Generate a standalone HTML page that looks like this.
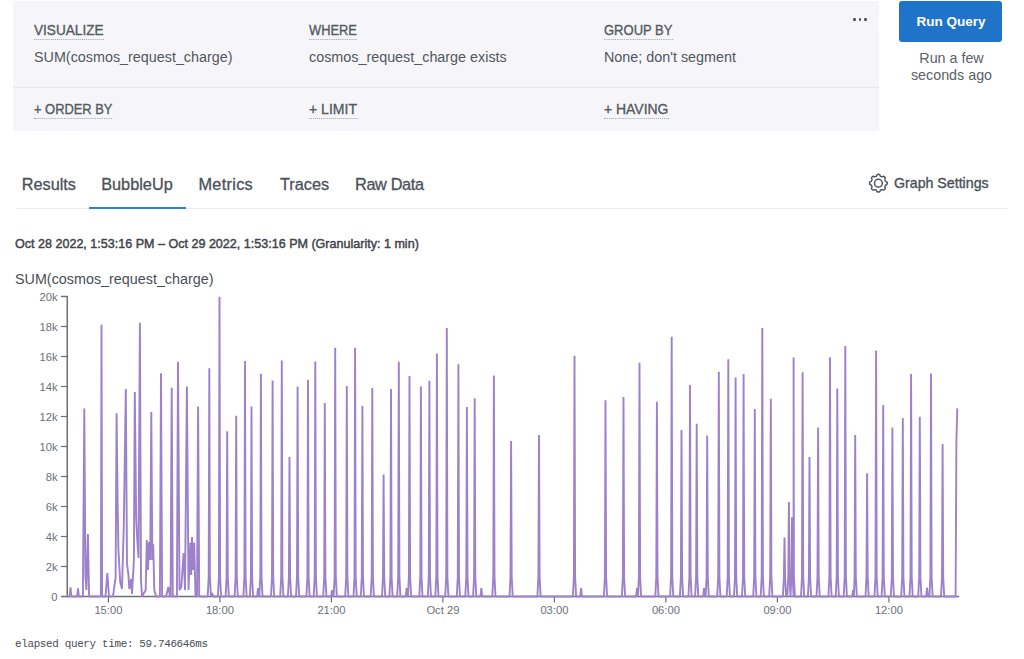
<!DOCTYPE html>
<html><head><meta charset="utf-8">
<style>
html,body{margin:0;padding:0;background:#fff;width:1024px;height:659px;overflow:hidden;position:relative;font-family:"Liberation Sans",sans-serif;}
.a{position:absolute;white-space:nowrap;line-height:1;}
#panel{position:absolute;left:13px;top:1px;width:866px;height:130px;background:#f6f6fa;}
#pdiv{position:absolute;left:13px;top:87px;width:866px;height:1px;background:#e8e8ef;}
.lbl{font-size:14.2px;color:#555a61;-webkit-text-stroke:0.35px #555a61;border-bottom:1px dotted #9fa3aa;padding-bottom:2px;}
.val{font-size:14.35px;color:#51565d;}
.tab{font-size:16.3px;color:#4b5159;-webkit-text-stroke:0.3px #4b5159;}
</style></head><body>
<div id="panel"></div>
<div id="pdiv"></div>
<div class="a lbl" style="left:34px;top:23px;;transform:scaleX(0.96);transform-origin:0 0;">VISUALIZE</div>
<div class="a val" style="left:34px;top:50px;">SUM(cosmos_request_charge)</div>
<div class="a lbl" style="left:309px;top:23px;;transform:scaleX(0.906);transform-origin:0 0;">WHERE</div>
<div class="a val" style="left:309px;top:50px;">cosmos_request_charge exists</div>
<div class="a lbl" style="left:604px;top:23px;;transform:scaleX(0.917);transform-origin:0 0;">GROUP BY</div>
<div class="a val" style="left:604px;top:50px;">None; don't segment</div>
<div class="a lbl" style="left:34px;top:102px;;transform:scaleX(0.909);transform-origin:0 0;">+ ORDER BY</div>
<div class="a lbl" style="left:309px;top:102px;;transform:scaleX(0.99);transform-origin:0 0;">+ LIMIT</div>
<div class="a lbl" style="left:604px;top:102px;;transform:scaleX(0.983);transform-origin:0 0;">+ HAVING</div>
<div style="position:absolute;left:853.35px;top:17.95px;width:2.7px;height:2.7px;border-radius:50%;background:#4b5059;"></div>
<div style="position:absolute;left:858.65px;top:17.95px;width:2.7px;height:2.7px;border-radius:50%;background:#4b5059;"></div>
<div style="position:absolute;left:863.85px;top:17.95px;width:2.7px;height:2.7px;border-radius:50%;background:#4b5059;"></div>
<div style="position:absolute;left:899px;top:0.8px;width:103.3px;height:41px;border-radius:3px;background:#1f74c9;"></div>
<div class="a" style="left:899.5px;width:103px;text-align:center;top:14.5px;font-weight:bold;font-size:13.5px;color:#fff;">Run Query</div>
<div class="a" style="left:899px;width:105px;text-align:center;top:50.3px;font-size:14.3px;line-height:16.3px;color:#5a6068;white-space:normal;">Run a few<br>seconds ago</div>

<div class="a tab" style="left:21.7px;top:175.8px;">Results</div>
<div class="a tab" style="left:101.2px;top:175.8px;">BubbleUp</div>
<div class="a tab" style="left:198.5px;top:175.8px;letter-spacing:0.3px;">Metrics</div>
<div class="a tab" style="left:280px;top:175.8px;">Traces</div>
<div class="a tab" style="left:355px;top:175.8px;letter-spacing:-0.35px;">Raw Data</div>
<div style="position:absolute;left:17px;top:208px;width:990px;height:1px;background:#ebebf2;"></div>
<div style="position:absolute;left:89px;top:207px;width:97px;height:2px;background:#2b83d3;"></div>
<svg width="1024" height="659" style="position:absolute;left:0;top:0"><path d="M878.40,174.35 L878.75,174.37 L879.09,174.45 L879.42,174.58 L879.73,174.78 L879.97,175.30 L880.17,175.83 L880.41,176.06 L880.66,176.24 L880.92,176.38 L881.17,176.50 L881.44,176.60 L881.72,176.68 L882.03,176.73 L882.36,176.74 L882.87,176.51 L883.41,176.31 L883.77,176.38 L884.10,176.53 L884.40,176.71 L884.66,176.94 L884.89,177.20 L885.07,177.50 L885.22,177.83 L885.29,178.19 L885.09,178.73 L884.86,179.24 L884.87,179.57 L884.92,179.88 L885.00,180.16 L885.10,180.43 L885.22,180.68 L885.36,180.94 L885.54,181.19 L885.77,181.43 L886.30,181.63 L886.82,181.87 L887.02,182.18 L887.15,182.51 L887.23,182.85 L887.25,183.20 L887.23,183.55 L887.15,183.89 L887.02,184.22 L886.82,184.53 L886.30,184.77 L885.77,184.97 L885.54,185.21 L885.36,185.46 L885.22,185.72 L885.10,185.97 L885.00,186.24 L884.92,186.52 L884.87,186.83 L884.86,187.16 L885.09,187.67 L885.29,188.21 L885.22,188.57 L885.07,188.90 L884.89,189.20 L884.66,189.46 L884.40,189.69 L884.10,189.87 L883.77,190.02 L883.41,190.09 L882.87,189.89 L882.36,189.66 L882.03,189.67 L881.72,189.72 L881.44,189.80 L881.17,189.90 L880.92,190.02 L880.66,190.16 L880.41,190.34 L880.17,190.57 L879.97,191.10 L879.73,191.62 L879.42,191.82 L879.09,191.95 L878.75,192.03 L878.40,192.05 L878.05,192.03 L877.71,191.95 L877.38,191.82 L877.07,191.62 L876.83,191.10 L876.63,190.57 L876.39,190.34 L876.14,190.16 L875.88,190.02 L875.63,189.90 L875.36,189.80 L875.08,189.72 L874.77,189.67 L874.44,189.66 L873.93,189.89 L873.39,190.09 L873.03,190.02 L872.70,189.87 L872.40,189.69 L872.14,189.46 L871.91,189.20 L871.73,188.90 L871.58,188.57 L871.51,188.21 L871.71,187.67 L871.94,187.16 L871.93,186.83 L871.88,186.52 L871.80,186.24 L871.70,185.97 L871.58,185.72 L871.44,185.46 L871.26,185.21 L871.03,184.97 L870.50,184.77 L869.98,184.53 L869.78,184.22 L869.65,183.89 L869.57,183.55 L869.55,183.20 L869.57,182.85 L869.65,182.51 L869.78,182.18 L869.98,181.87 L870.50,181.63 L871.03,181.43 L871.26,181.19 L871.44,180.94 L871.58,180.68 L871.70,180.43 L871.80,180.16 L871.88,179.88 L871.93,179.57 L871.94,179.24 L871.71,178.73 L871.51,178.19 L871.58,177.83 L871.73,177.50 L871.91,177.20 L872.14,176.94 L872.40,176.71 L872.70,176.53 L873.03,176.38 L873.39,176.31 L873.93,176.51 L874.44,176.74 L874.77,176.73 L875.08,176.68 L875.36,176.60 L875.63,176.50 L875.88,176.38 L876.14,176.24 L876.39,176.06 L876.63,175.83 L876.83,175.30 L877.07,174.78 L877.38,174.58 L877.71,174.45 L878.05,174.37Z" fill="none" stroke="#50565e" stroke-width="1.5"/><circle cx="878.4" cy="183.2" r="3.9" fill="none" stroke="#50565e" stroke-width="1.5"/></svg>
<div class="a" style="left:894px;top:176.3px;font-size:14.2px;color:#4b5159;-webkit-text-stroke:0.35px #4b5159;">Graph Settings</div>

<div class="a" style="left:15px;top:237.6px;font-size:12.55px;color:#3f444b;-webkit-text-stroke:0.45px #3f444b;">Oct 28 2022, 1:53:16 PM – Oct 29 2022, 1:53:16 PM (Granularity: 1 min)</div>
<div class="a" style="left:15px;top:272px;font-size:14.35px;color:#4a4f57;">SUM(cosmos_request_charge)</div>
<div class="a" style="left:15px;top:638.6px;font-family:'Liberation Mono',monospace;font-size:10.9px;letter-spacing:-0.32px;color:#4d5259;-webkit-text-stroke:0.05px #4d5259;">elapsed query time: 59.746646ms</div>
<!--CHART--><svg width="1024" height="659" style="position:absolute;left:0;top:0"><path d="M61,296.5 H67.25 V596.5 H61" fill="none" stroke="#6b7078" stroke-width="1.5"/><line x1="61" y1="566.5" x2="67" y2="566.5" stroke="#6b7078" stroke-width="1.2"/><line x1="61" y1="536.5" x2="67" y2="536.5" stroke="#6b7078" stroke-width="1.2"/><line x1="61" y1="506.5" x2="67" y2="506.5" stroke="#6b7078" stroke-width="1.2"/><line x1="61" y1="476.5" x2="67" y2="476.5" stroke="#6b7078" stroke-width="1.2"/><line x1="61" y1="446.5" x2="67" y2="446.5" stroke="#6b7078" stroke-width="1.2"/><line x1="61" y1="416.5" x2="67" y2="416.5" stroke="#6b7078" stroke-width="1.2"/><line x1="61" y1="386.5" x2="67" y2="386.5" stroke="#6b7078" stroke-width="1.2"/><line x1="61" y1="356.5" x2="67" y2="356.5" stroke="#6b7078" stroke-width="1.2"/><line x1="61" y1="326.5" x2="67" y2="326.5" stroke="#6b7078" stroke-width="1.2"/><path d="M67,596.5 H959" fill="none" stroke="#6b7078" stroke-width="1.5"/><line x1="108.4" y1="596.5" x2="108.4" y2="602.5" stroke="#6b7078" stroke-width="1.2"/><line x1="219.9" y1="596.5" x2="219.9" y2="602.5" stroke="#6b7078" stroke-width="1.2"/><line x1="331.4" y1="596.5" x2="331.4" y2="602.5" stroke="#6b7078" stroke-width="1.2"/><line x1="442.9" y1="596.5" x2="442.9" y2="602.5" stroke="#6b7078" stroke-width="1.2"/><line x1="554.4" y1="596.5" x2="554.4" y2="602.5" stroke="#6b7078" stroke-width="1.2"/><line x1="665.9" y1="596.5" x2="665.9" y2="602.5" stroke="#6b7078" stroke-width="1.2"/><line x1="777.4" y1="596.5" x2="777.4" y2="602.5" stroke="#6b7078" stroke-width="1.2"/><line x1="888.9" y1="596.5" x2="888.9" y2="602.5" stroke="#6b7078" stroke-width="1.2"/><path d="M67.00,596.5 L69.65,596.5 L70.50,587.4 L71.35,596.5 L77.15,596.5 L78.00,588.3 L78.85,596.5 L82.90,596.5 L84.30,408.4 L85.40,575.0 L86.40,590.0 L87.90,534.0 L89.10,596.5 L100.90,596.5 L101.50,324.7 L102.10,596.5 L105.50,596.5 L107.30,573.0 L109.00,596.5 L113.00,596.5 L114.50,585.0 L115.60,578.0 L116.60,413.3 L117.60,500.0 L118.40,549.0 L120.20,582.0 L122.00,589.0 L123.80,525.5 L125.80,389.0 L127.00,563.8 L128.40,574.7 L129.30,589.0 L131.10,579.0 L132.00,594.0 L133.90,560.0 L134.80,391.9 L136.20,520.0 L137.50,543.8 L138.50,558.0 L139.90,322.8 L141.00,580.0 L142.00,596.5 L145.70,590.0 L146.80,540.0 L148.00,570.0 L149.00,542.0 L150.20,560.0 L151.30,412.1 L152.30,560.0 L153.20,544.0 L154.30,590.0 L156.00,596.5 L159.90,596.5 L161.00,373.3 L162.10,596.5 L166.00,596.5 L168.40,587.0 L170.00,596.5 L170.60,596.5 L171.70,387.8 L172.80,596.5 L176.90,596.5 L178.00,361.8 L179.50,590.0 L181.30,587.0 L183.60,553.0 L185.00,590.0 L186.90,386.6 L188.50,590.0 L190.40,542.5 L191.20,575.0 L192.00,537.0 L193.00,570.0 L194.20,542.5 L195.50,596.5 L197.00,596.5 L198.10,406.5 L199.20,596.5 L207.70,596.5 L208.70,576.5 L209.30,368.2 L209.90,576.5 L210.90,596.5 L210.90,596.5 L211.80,593.0 L213.40,596.5 L217.90,596.5 L218.90,576.5 L219.50,296.8 L220.10,576.5 L221.10,596.5 L225.60,596.5 L226.60,576.5 L227.20,431.3 L227.80,576.5 L228.80,596.5 L234.60,596.5 L235.60,576.5 L236.20,415.7 L236.80,576.5 L237.80,596.5 L243.40,596.5 L244.40,576.5 L245.00,361.1 L245.60,576.5 L246.60,596.5 L249.90,596.5 L250.90,576.5 L251.50,406.5 L252.10,576.5 L253.10,596.5 L257.15,596.5 L258.00,588.0 L258.85,596.5 L259.30,596.5 L260.30,576.5 L260.90,373.7 L261.50,576.5 L262.50,596.5 L271.00,596.5 L272.00,576.5 L272.60,380.5 L273.20,576.5 L274.20,596.5 L280.20,596.5 L281.20,576.5 L281.80,360.4 L282.40,576.5 L283.40,596.5 L287.90,596.5 L288.90,576.5 L289.50,457.0 L290.10,576.5 L291.10,596.5 L296.00,596.5 L297.00,576.5 L297.60,386.6 L298.20,576.5 L299.20,596.5 L306.40,596.5 L307.40,576.5 L308.00,379.8 L308.60,576.5 L309.60,596.5 L313.70,596.5 L314.70,576.5 L315.30,361.4 L315.90,576.5 L316.90,596.5 L323.20,596.5 L324.20,576.5 L324.80,403.1 L325.40,576.5 L326.40,596.5 L331.15,596.5 L332.00,590.0 L332.85,596.5 L333.60,596.5 L334.60,576.5 L335.20,347.8 L335.80,576.5 L336.80,596.5 L345.20,596.5 L346.20,576.5 L346.80,386.1 L347.40,576.5 L348.40,596.5 L353.50,596.5 L354.50,576.5 L355.10,347.8 L355.70,576.5 L356.70,596.5 L360.80,596.5 L361.80,576.5 L362.40,406.0 L363.00,576.5 L364.00,596.5 L370.70,596.5 L371.70,576.5 L372.30,388.1 L372.90,576.5 L373.90,596.5 L382.00,596.5 L383.00,576.5 L383.60,474.5 L384.20,576.5 L385.20,596.5 L389.40,596.5 L390.40,576.5 L391.00,389.0 L391.60,576.5 L392.60,596.5 L397.20,596.5 L398.20,576.5 L398.80,361.8 L399.40,576.5 L400.40,596.5 L405.75,596.5 L406.60,588.0 L407.45,596.5 L407.90,596.5 L408.90,576.5 L409.50,375.9 L410.10,576.5 L411.10,596.5 L419.30,596.5 L420.30,576.5 L420.90,386.4 L421.50,576.5 L422.50,596.5 L427.80,596.5 L428.80,576.5 L429.40,380.8 L430.00,576.5 L431.00,596.5 L435.30,596.5 L436.30,576.5 L436.90,353.6 L437.50,576.5 L438.50,596.5 L445.20,596.5 L446.20,576.5 L446.80,327.9 L447.40,576.5 L448.40,596.5 L456.80,596.5 L457.80,576.5 L458.40,364.3 L459.00,576.5 L460.00,596.5 L465.30,596.5 L466.30,576.5 L466.90,407.0 L467.50,576.5 L468.50,596.5 L473.10,596.5 L474.10,576.5 L474.70,398.3 L475.30,576.5 L476.30,596.5 L480.45,596.5 L481.30,588.0 L482.15,596.5 L492.30,596.5 L493.30,576.5 L493.90,375.4 L494.50,576.5 L495.50,596.5 L509.50,596.5 L510.50,576.5 L511.10,441.0 L511.70,576.5 L512.70,596.5 L537.40,596.5 L538.40,576.5 L539.00,434.9 L539.60,576.5 L540.60,596.5 L572.90,596.5 L573.90,576.5 L574.50,355.8 L575.10,576.5 L576.10,596.5 L580.25,596.5 L581.10,588.0 L581.95,596.5 L603.90,596.5 L604.90,576.5 L605.50,400.2 L606.10,576.5 L607.10,596.5 L621.90,596.5 L622.90,576.5 L623.50,397.0 L624.10,576.5 L625.10,596.5 L636.15,596.5 L637.00,588.0 L637.85,596.5 L637.90,596.5 L638.90,576.5 L639.50,362.8 L640.10,576.5 L641.10,596.5 L655.30,596.5 L656.30,576.5 L656.90,401.7 L657.50,576.5 L658.50,596.5 L670.10,596.5 L671.10,576.5 L671.70,336.8 L672.30,576.5 L673.30,596.5 L679.90,596.5 L680.90,576.5 L681.50,430.0 L682.10,576.5 L683.10,596.5 L688.40,596.5 L689.40,576.5 L690.00,385.1 L690.60,576.5 L691.60,596.5 L695.10,596.5 L696.10,576.5 L696.70,423.7 L697.30,576.5 L698.30,596.5 L703.15,596.5 L704.00,588.0 L704.85,596.5 L705.60,596.5 L706.60,576.5 L707.20,435.6 L707.80,576.5 L708.80,596.5 L717.20,596.5 L718.20,576.5 L718.80,371.8 L719.40,576.5 L720.40,596.5 L726.70,596.5 L727.70,576.5 L728.30,359.2 L728.90,576.5 L729.90,596.5 L734.00,596.5 L735.00,576.5 L735.60,377.4 L736.20,576.5 L737.20,596.5 L742.00,596.5 L743.00,576.5 L743.60,374.0 L744.20,576.5 L745.20,596.5 L753.20,596.5 L754.20,576.5 L754.80,408.9 L755.40,576.5 L756.40,596.5 L760.70,596.5 L761.70,576.5 L762.30,328.1 L762.90,576.5 L763.90,596.5 L769.20,596.5 L770.20,576.5 L770.80,398.7 L771.40,576.5 L772.40,596.5 L782.90,596.5 L783.90,576.5 L784.50,537.6 L785.10,576.5 L786.10,596.5 L787.30,596.5 L788.30,576.5 L788.90,501.9 L789.50,576.5 L790.50,596.5 L790.50,596.5 L791.40,576.5 L792.00,517.2 L792.60,576.5 L793.60,596.5 L793.60,596.5 L793.60,576.5 L793.60,357.5 L793.90,576.5 L794.90,596.5 L801.00,596.5 L802.00,576.5 L802.60,372.3 L803.20,576.5 L804.20,596.5 L807.90,596.5 L808.90,576.5 L809.50,457.0 L810.10,576.5 L811.10,596.5 L816.50,596.5 L817.50,576.5 L818.10,427.6 L818.70,576.5 L819.70,596.5 L828.40,596.5 L829.40,576.5 L830.00,357.2 L830.60,576.5 L831.60,596.5 L835.70,596.5 L836.70,576.5 L837.30,388.5 L837.90,576.5 L838.90,596.5 L843.70,596.5 L844.70,576.5 L845.30,346.1 L845.90,576.5 L846.90,596.5 L852.15,596.5 L853.00,590.0 L853.85,596.5 L853.85,596.5 L854.60,576.5 L855.20,434.9 L855.80,576.5 L856.80,596.5 L865.50,596.5 L866.50,576.5 L867.10,473.3 L867.70,576.5 L868.70,596.5 L874.50,596.5 L875.50,576.5 L876.10,350.4 L876.70,576.5 L877.70,596.5 L881.60,596.5 L882.60,576.5 L883.20,405.0 L883.80,576.5 L884.80,596.5 L890.80,596.5 L891.80,576.5 L892.40,427.4 L893.00,576.5 L894.00,596.5 L901.20,596.5 L902.20,576.5 L902.80,418.2 L903.40,576.5 L904.40,596.5 L909.50,596.5 L910.50,576.5 L911.10,374.0 L911.70,576.5 L912.70,596.5 L918.20,596.5 L919.20,576.5 L919.80,416.7 L920.40,576.5 L921.40,596.5 L926.15,596.5 L927.00,587.6 L927.85,596.5 L929.40,596.5 L930.40,576.5 L931.00,373.5 L931.60,576.5 L932.60,596.5 L941.00,596.5 L942.00,576.5 L942.60,444.1 L943.20,576.5 L944.20,596.5 L955.60,596.5 L956.40,440.0 L957.30,408.4" fill="none" stroke="#9d81ca" stroke-width="1.9" stroke-linejoin="bevel"/><g font-family="Liberation Sans, sans-serif" font-size="11.2" fill="#6b7078"><text x="57.5" y="600.6" text-anchor="end">0</text><text x="57.5" y="570.6" text-anchor="end">2k</text><text x="57.5" y="540.6" text-anchor="end">4k</text><text x="57.5" y="510.6" text-anchor="end">6k</text><text x="57.5" y="480.6" text-anchor="end">8k</text><text x="57.5" y="450.6" text-anchor="end">10k</text><text x="57.5" y="420.6" text-anchor="end">12k</text><text x="57.5" y="390.6" text-anchor="end">14k</text><text x="57.5" y="360.6" text-anchor="end">16k</text><text x="57.5" y="330.6" text-anchor="end">18k</text><text x="57.5" y="300.6" text-anchor="end">20k</text><text x="108.4" y="613.8" text-anchor="middle">15:00</text><text x="219.9" y="613.8" text-anchor="middle">18:00</text><text x="331.4" y="613.8" text-anchor="middle">21:00</text><text x="442.9" y="613.8" text-anchor="middle">Oct 29</text><text x="554.4" y="613.8" text-anchor="middle">03:00</text><text x="665.9" y="613.8" text-anchor="middle">06:00</text><text x="777.4" y="613.8" text-anchor="middle">09:00</text><text x="888.9" y="613.8" text-anchor="middle">12:00</text></g></svg><!--/CHART-->
</body></html>
